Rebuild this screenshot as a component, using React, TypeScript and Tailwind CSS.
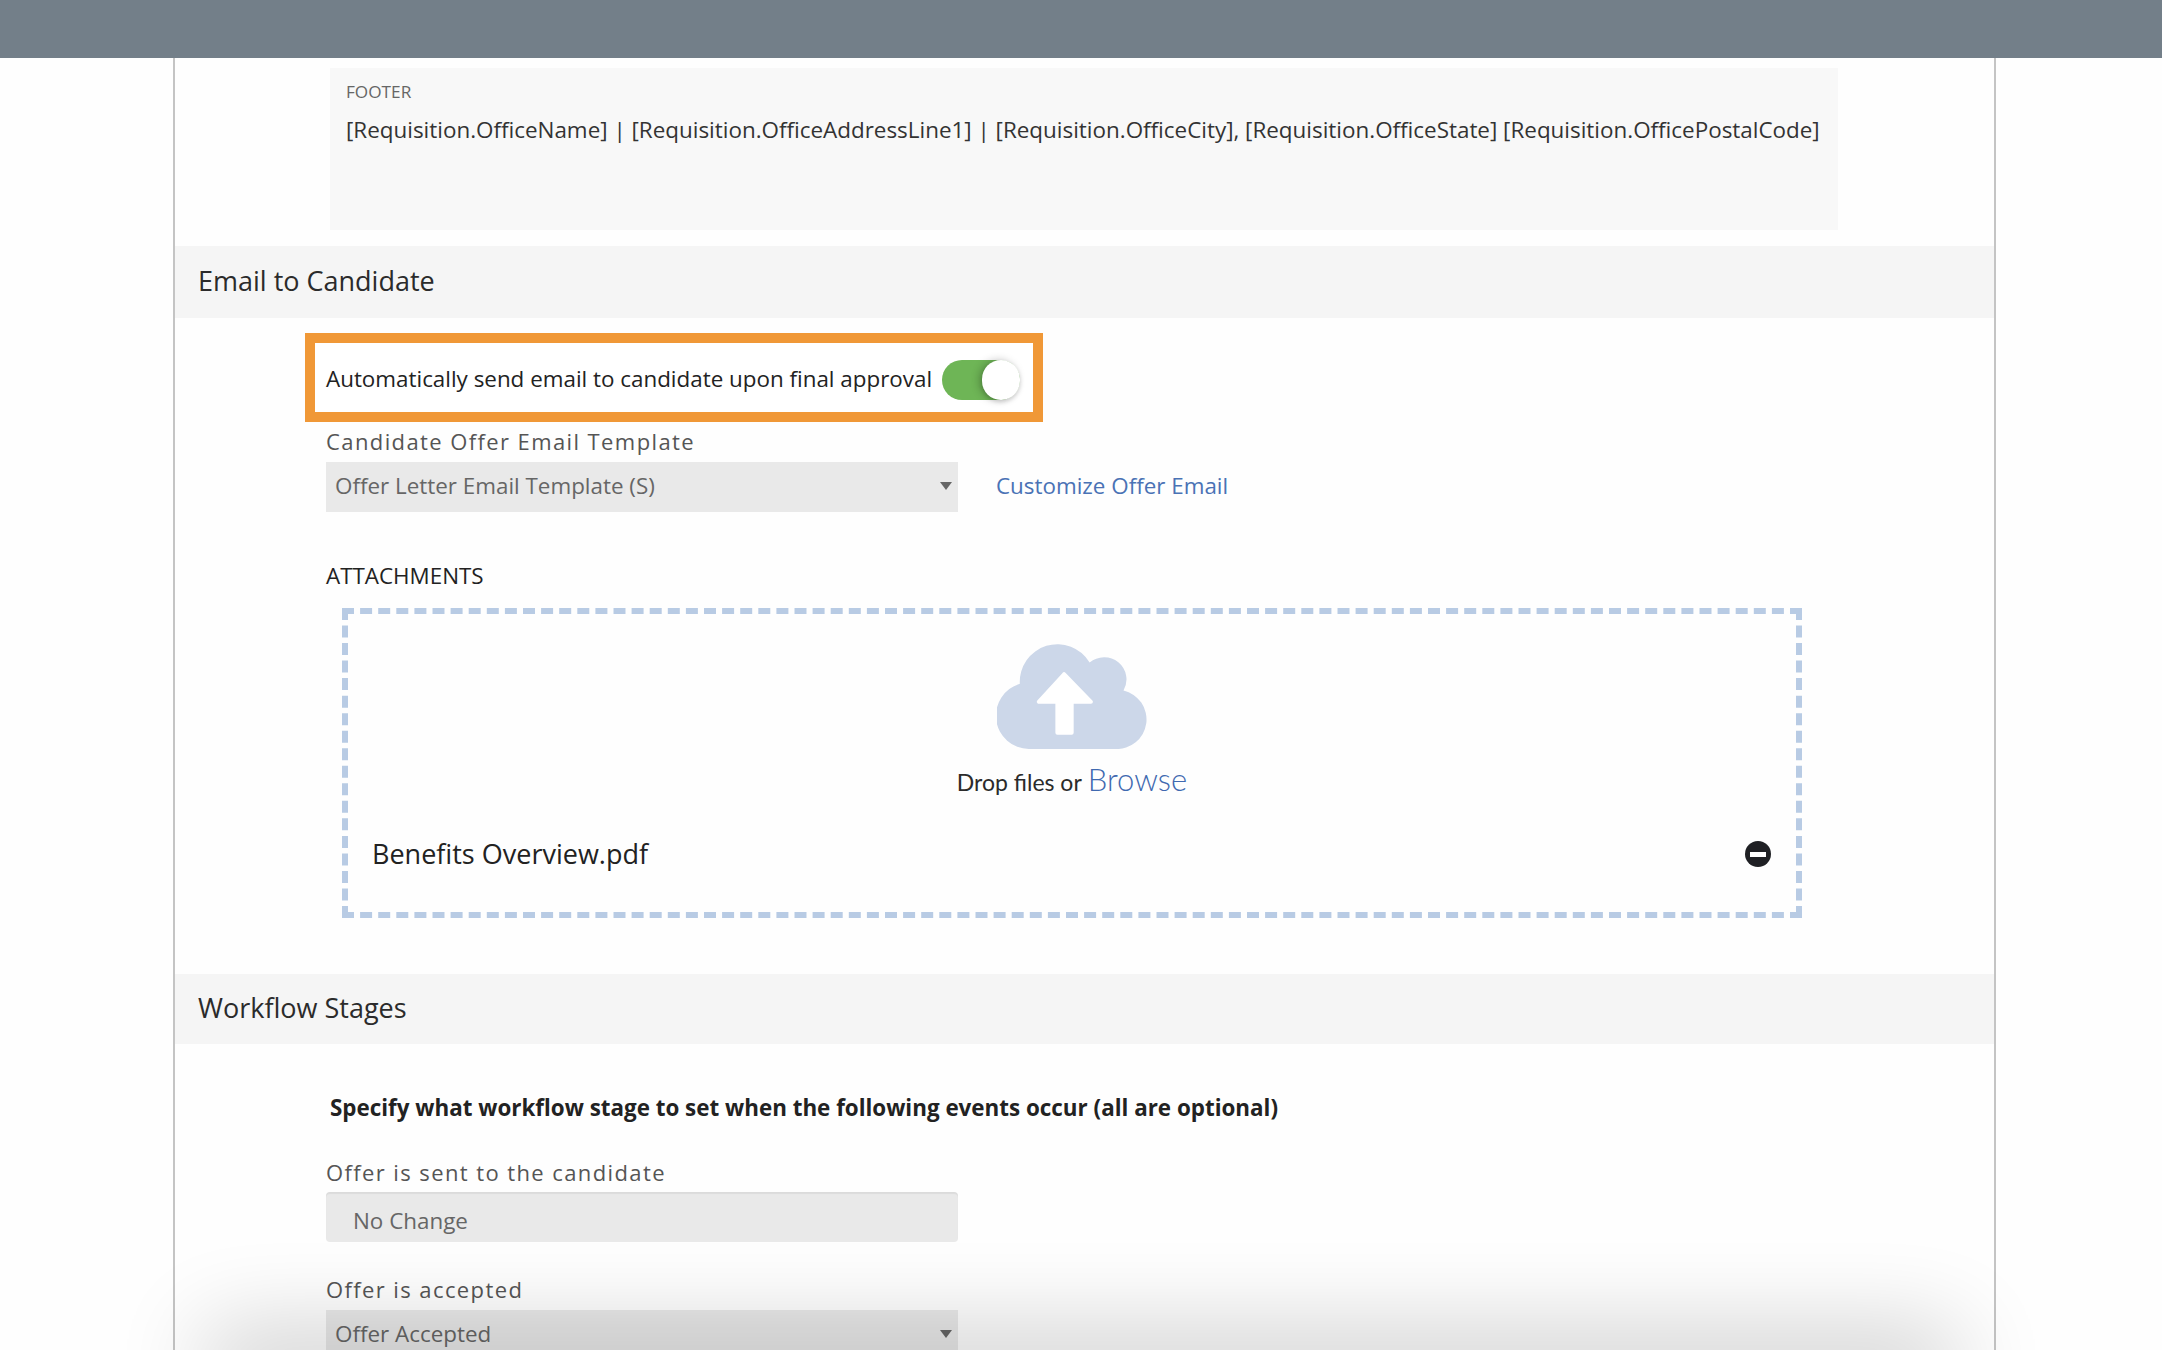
function Caret() {
  return (
    <svg width="12" height="8" viewBox="0 0 12 8" className="shrink-0">
      <path d="M0 0H12L6 8Z" fill="#666666" />
    </svg>
  );
}

function SelectBox({ value, className }: { value: string; className?: string }) {
  return (
    <div className={`flex h-[50px] w-[632px] items-center justify-between bg-[#e9e9e9] pb-[3px] pl-[9px] pr-[6px] text-[22.4px] text-[#666666] ${className ?? ""}`}>
      <span>{value}</span>
      <Caret />
    </div>
  );
}

function SectionHeader({ title, className }: { title: string; className?: string }) {
  return (
    <div className={`flex items-center bg-[#f5f5f5] pb-[2px] pl-[23px] text-[27px] text-[#2b2b2b] ${className ?? ""}`}>
      {title}
    </div>
  );
}

function FieldLabel({ children, className }: { children: string; className?: string }) {
  return (
    <div className={`h-[30px] text-[22px] leading-[30px] tracking-[1.4px] text-[#555555] ${className ?? ""}`}>
      {children}
    </div>
  );
}

function CloudUpload() {
  return (
    <svg width="150" height="105" viewBox="290 72 450 316">
      <path
        d="M385 388A100 100 0 0 1 358 192A113 113 0 0 1 568 128A67 67 0 0 1 670 212A89.2 89.2 0 0 1 645 388Z"
        fill="#ccd7e9"
      />
      <path
        d="M491 163L415 246H471V339H514V246H572Z"
        fill="#ffffff"
        stroke="#ffffff"
        strokeWidth="12"
        strokeLinejoin="round"
      />
    </svg>
  );
}

export default function App() {
  return (
    <div className="relative h-[1350px] overflow-hidden bg-[#fefefe] font-['Open_Sans',sans-serif]">
      <div className="h-[58px] bg-[#737f89]" />

      <div className="ml-[173px] mr-[166px] h-[1292px] border-x-2 border-[#c4c4c4] pt-[10px]">
        {/* Footer preview */}
        <div className="ml-[155px] h-[162px] w-[1508px] bg-[#f8f8f8] pl-[16px] pt-[13px]">
          <div className="text-[17.2px] leading-[22px] text-[#666666]">FOOTER</div>
          <div className="mt-[12px] whitespace-nowrap text-[22.43px] leading-[30px] text-[#333333]">
            [Requisition.OfficeName] | [Requisition.OfficeAddressLine1] | [Requisition.OfficeCity], [Requisition.OfficeState] [Requisition.OfficePostalCode]
          </div>
        </div>

        <SectionHeader title="Email to Candidate" className="mt-[16px] h-[72px]" />

        {/* Auto send toggle */}
        <div className="ml-[130px] mt-[15px] flex h-[89px] w-[738px] items-center border-[10px] border-[#f09837] bg-white pl-[11px] pt-[4px]">
          <span className="mb-[1px] whitespace-nowrap text-[22.4px] text-[#222222]">
            Automatically send email to candidate upon final approval
          </span>
          <div className="ml-auto mr-[13px] flex h-[40px] w-[78px] justify-end rounded-full bg-[#6eb556]">
            <div className="h-[40px] w-[38px] rounded-full bg-white shadow-[-3px_0_8px_rgba(0,0,0,0.22),0_2px_4px_rgba(0,0,0,0.15)]" />
          </div>
        </div>

        <div className="ml-[151px]">
          <FieldLabel className="mt-[4px]">Candidate Offer Email Template</FieldLabel>
          <div className="mt-[6px] flex items-center">
            <SelectBox value="Offer Letter Email Template (S)" />
            <a className="ml-[38px] pb-[3px] text-[22.4px] text-[#4a72b5]">Customize Offer Email</a>
          </div>
          <div className="mt-[49px] h-[30px] text-[22.4px] leading-[30px] text-[#222222]">ATTACHMENTS</div>
        </div>

        {/* Drop zone */}
        <div className="ml-[167px] mt-[17px] flex h-[310px] w-[1460px] flex-col items-center border-[6px] border-dashed border-[#b8cbe4] pt-[30px]">
          <CloudUpload />
          <div className="mt-[7px] flex h-[44px] items-baseline font-['Lato',sans-serif] text-[23px] text-[#2b2b2b]">
            Drop files or
            <a className="ml-[6px] text-[31px] font-light text-[#3f69b0]">Browse</a>
          </div>
          <div className="mt-[34px] flex w-full items-center justify-between pl-[24px] pr-[25px]">
            <span className="text-[27px] text-[#222222]">Benefits Overview.pdf</span>
            <div className="flex size-[26px] items-center justify-center rounded-full bg-[#1f2024]">
              <div className="h-[5px] w-[16px] bg-white" />
            </div>
          </div>
        </div>

        <SectionHeader title="Workflow Stages" className="mt-[56px] h-[70px]" />

        <div className="ml-[151px]">
          <div className="ml-[4px] mt-[48px] h-[32px] text-[22.4px] font-bold leading-[32px] text-[#222222]">
            Specify what workflow stage to set when the following events occur (all are optional)
          </div>
          <FieldLabel className="mt-[33px]">Offer is sent to the candidate</FieldLabel>
          <div className="mt-[5px] flex h-[50px] w-[632px] items-center rounded-[4px] bg-[#e9e9e9] pl-[27px] pt-[8px] text-[22.4px] text-[#666666] shadow-[inset_0_2px_1px_rgba(0,0,0,0.06)]">
            No Change
          </div>
          <FieldLabel className="mt-[32px]">Offer is accepted</FieldLabel>
          <SelectBox value="Offer Accepted" className="mt-[6px]" />
        </div>
      </div>

      {/* Shadow cast by the sticky bar below the fold */}
      <div className="absolute bottom-[-30px] left-[225px] right-[225px] h-[30px] shadow-[0_0_90px_20px_rgba(0,0,0,0.2)]" />
    </div>
  );
}
